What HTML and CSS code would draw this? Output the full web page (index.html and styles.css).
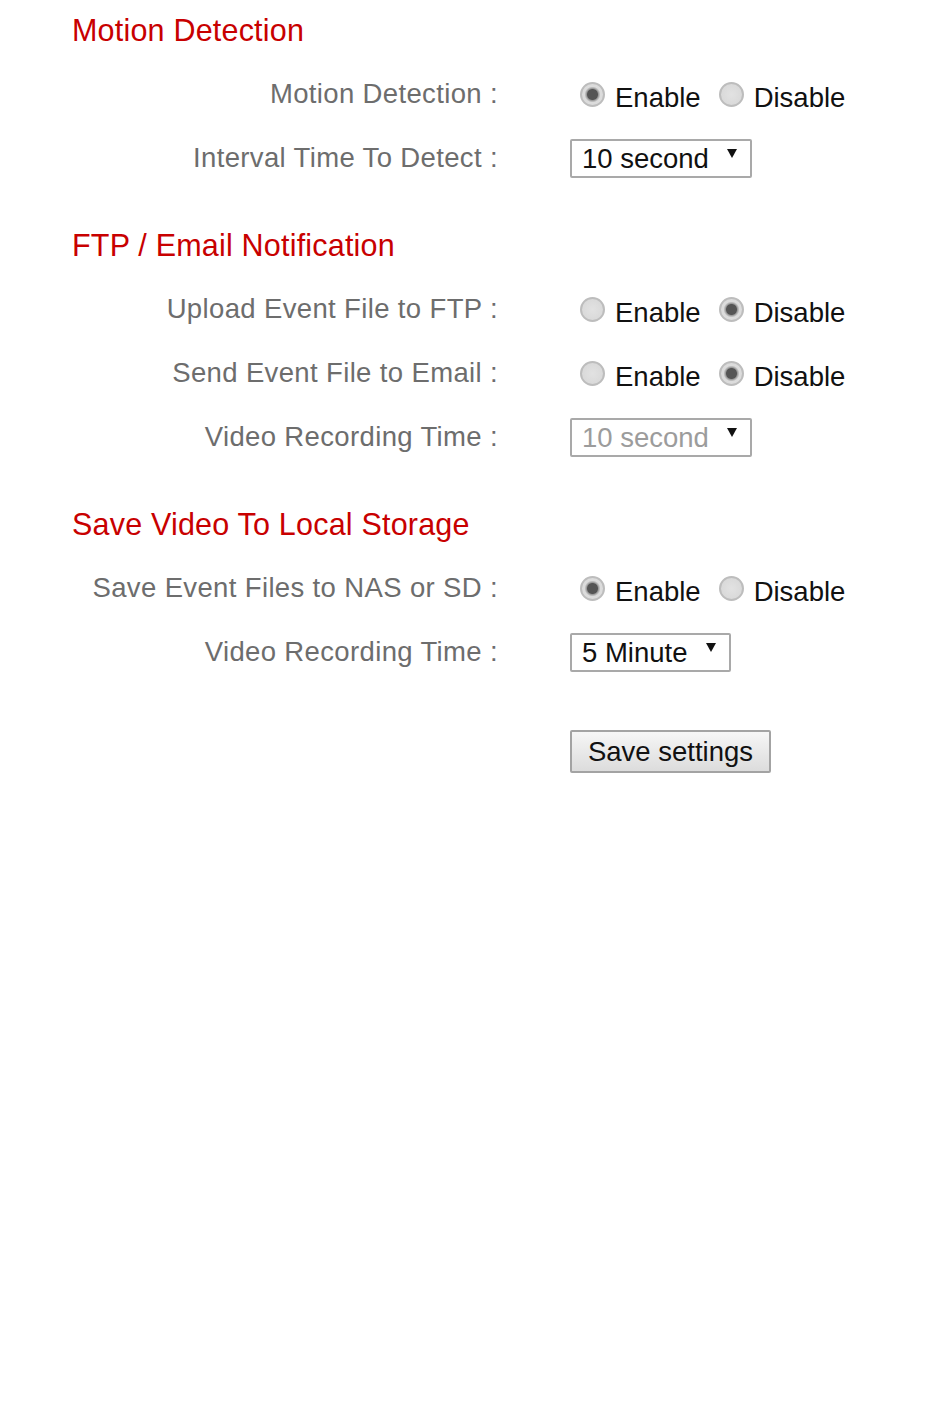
FILE: index.html
```html
<!DOCTYPE html>
<html>
<head>
<meta charset="utf-8">
<title>Event Settings</title>
<link rel="stylesheet" href="styles.css">
</head>
<body>
<form class="settings">

  <section class="group">
    <h2 class="group-title">Motion Detection</h2>
    <div class="field">
      <label class="field-label">Motion Detection :</label>
      <div class="choices">
        <label class="choice"><input type="radio" name="motion" checked>Enable</label>
        <label class="choice"><input type="radio" name="motion">Disable</label>
      </div>
    </div>
    <div class="field">
      <label class="field-label">Interval Time To Detect :</label>
      <div class="dropdown">
        <select class="select-sec" name="interval">
          <option>10 second</option>
          <option>30 second</option>
          <option>60 second</option>
        </select>
      </div>
    </div>
  </section>

  <section class="group">
    <h2 class="group-title">FTP / Email Notification</h2>
    <div class="field">
      <label class="field-label">Upload Event File to FTP :</label>
      <div class="choices">
        <label class="choice"><input type="radio" name="ftp">Enable</label>
        <label class="choice"><input type="radio" name="ftp" checked>Disable</label>
      </div>
    </div>
    <div class="field">
      <label class="field-label">Send Event File to Email :</label>
      <div class="choices">
        <label class="choice"><input type="radio" name="email">Enable</label>
        <label class="choice"><input type="radio" name="email" checked>Disable</label>
      </div>
    </div>
    <div class="field">
      <label class="field-label">Video Recording Time :</label>
      <div class="dropdown">
        <select class="select-sec" name="notify_time" disabled>
          <option>10 second</option>
          <option>30 second</option>
        </select>
      </div>
    </div>
  </section>

  <section class="group">
    <h2 class="group-title">Save Video To Local Storage</h2>
    <div class="field">
      <label class="field-label">Save Event Files to NAS or SD :</label>
      <div class="choices">
        <label class="choice"><input type="radio" name="local" checked>Enable</label>
        <label class="choice"><input type="radio" name="local">Disable</label>
      </div>
    </div>
    <div class="field">
      <label class="field-label">Video Recording Time :</label>
      <div class="dropdown">
        <select class="select-min" name="local_time">
          <option>1 Minute</option>
          <option>3 Minute</option>
          <option selected>5 Minute</option>
        </select>
      </div>
    </div>
  </section>

  <div class="actions">
    <button type="button" class="btn">Save settings</button>
  </div>

</form>
</body>
</html>
```

FILE: styles.css
```css
html, body
{
  margin: 0;
  background: #fff;
}

body
{
  font-family: "Liberation Sans", Arial, sans-serif;
  padding: 12px 0 0 72px;
}

.group { margin-bottom: 37px; }

.group-title
{
  margin: 0 0 14px 0;
  font-size: 30.5px;
  line-height: 36px;
  font-weight: normal;
  letter-spacing: 0.2px;
  color: #c80000;
}

/* one label / value row */
.field
{
  display: grid;
  grid-template-columns: 426px auto;
  column-gap: 72px;
  height: 64px;
  align-items: center;
}

.field-label
{
  text-align: right;
  font-size: 27.5px;
  line-height: 32px;
  letter-spacing: 0.36px;
  color: #6d6d6d;
}

.choices
{
  display: flex;
  gap: 18px;
  padding: 8px 0 0 10px;
}

.choice
{
  display: flex;
  align-items: center;
  font-size: 27.5px;
  line-height: 32px;
  color: #111;
}

.choice input
{
  appearance: none;
  -webkit-appearance: none;
  box-sizing: border-box;
  width: 25px;
  height: 25px;
  margin: 0 10px 8px 0;
  border: 2px solid #bdbdbd;
  border-radius: 50%;
  background: radial-gradient(circle, #e2e2e2 0, #d6d6d6 100%);
}

.choice input:checked
{
  background: radial-gradient(circle, #555 0 5px, #9a9a9a 6px, #dcdcdc 8px);
}

.dropdown
{
  position: relative;
  display: inline-block;
  justify-self: start;
}

.dropdown select
{
  appearance: none;
  -webkit-appearance: none;
  box-sizing: border-box;
  height: 39px;
  margin: 0;
  padding: 0 40px 0 10px;
  border: 2px solid #a9a9a9;
  border-radius: 2px;
  background: #fff;
  font-family: inherit;
  font-size: 27.5px;
  color: #111;
}

.dropdown select:disabled { color: #9c9c9c; opacity: 1; }

.select-sec { width: 182px; }
.select-min { width: 161px; }

/* arrow glyph of the drop-down */
.dropdown::after
{
  content: "";
  position: absolute;
  right: 15px;
  top: 10px;
  border-left: 5px solid transparent;
  border-right: 5px solid transparent;
  border-top: 9px solid #111;
  pointer-events: none;
}

.actions
{
  margin: 46px 0 0 498px;
}

.btn
{
  box-sizing: border-box;
  width: 201px;
  height: 43px;
  padding: 0;
  border: 2px solid #a3a3a3;
  border-radius: 2px;
  background: linear-gradient(#f6f6f6, #dcdcdc);
  font-family: inherit;
  font-size: 27.5px;
  color: #111;
}
```
